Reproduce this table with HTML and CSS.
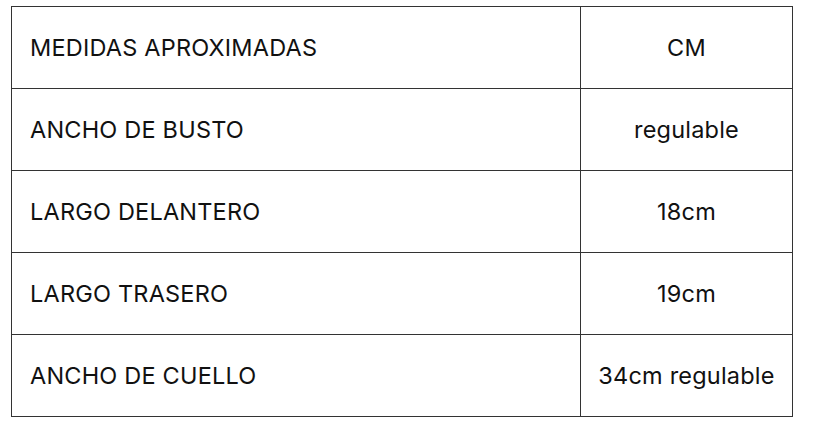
FILE: index.html
```html
<!DOCTYPE html>
<html lang="es">
<head>
<meta charset="utf-8">
<link rel="stylesheet" href="styles.css">
</head>
<body>
<table class="sizes">
  <tr><td class="label">MEDIDAS APROXIMADAS</td><td class="value">CM</td></tr>
  <tr><td class="label">ANCHO DE BUSTO</td><td class="value">regulable</td></tr>
  <tr><td class="label">LARGO DELANTERO</td><td class="value">18cm</td></tr>
  <tr><td class="label">LARGO TRASERO</td><td class="value">19cm</td></tr>
  <tr><td class="label">ANCHO DE CUELLO</td><td class="value">34cm regulable</td></tr>
</table>
</body>
</html>
```
FILE: styles.css
```css
html, body {
  background: #ffffff;
}
body {
  margin: 6px 0 0 11px;
  font-family: "Inter", "Liberation Sans", sans-serif;
  color: #111111;
}
.sizes {
  border-collapse: collapse;
  width: 782px;
  font-size: 23.5px;
  letter-spacing: 0.2px;
}
.sizes td {
  border: 1px solid #333333;
  height: 81px;
  padding: 0;
  vertical-align: middle;
}
.sizes .label {
  width: 550px;
  padding-left: 18px;
  text-align: left;
}
.sizes .value {
  text-align: center;
}
```
